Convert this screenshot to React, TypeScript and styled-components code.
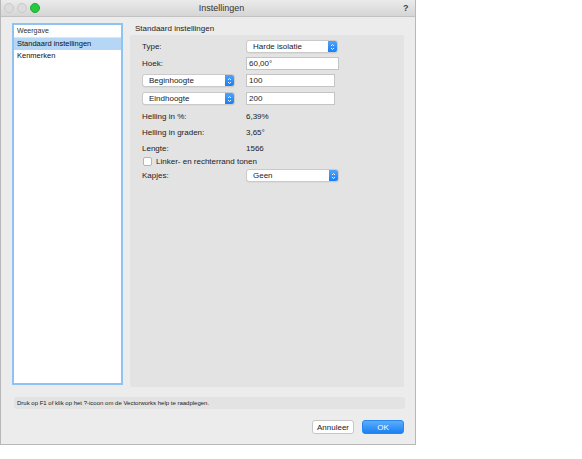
import React from "react";
import styled, { createGlobalStyle } from "styled-components";

const Global = createGlobalStyle`
  html, body { margin: 0; padding: 0; background: #ffffff; }
  body { font-family: "Liberation Sans", Arial, sans-serif; color: #222; }
  * { box-sizing: border-box; }
`;

const Window = styled.div`
  width: 416px;
  height: 445px;
  background: #ececec;
  border: 1px solid #b8b8b8;
  border-top: none;
  display: flex;
  flex-direction: column;
`;

const TitleBar = styled.div`
  height: 17px;
  background: linear-gradient(#ebebeb, #d5d5d5);
  border-bottom: 1px solid #c2c2c2;
  display: flex;
  align-items: center;
  padding: 0 4px 0 3px;
`;

const Lights = styled.div`
  display: flex;
  gap: 3px;
`;

const Light = styled.span<{ $c: string; $b: string }>`
  width: 10px;
  height: 10px;
  border-radius: 50%;
  background: ${(p) => p.$c};
  border: 1px solid ${(p) => p.$b};
`;

const Title = styled.div`
  flex: 1;
  text-align: center;
  font-size: 9px;
  color: #333;
`;

const Help = styled.div`
  font-size: 9px;
  font-weight: bold;
  color: #444;
  width: 8px;
`;

const Body = styled.div`
  flex: 1;
  display: flex;
  flex-direction: column;
  padding: 6px 11px 10px 11px;
`;

const Main = styled.div`
  display: flex;
  gap: 7px;
  height: 366px;
`;

const List = styled.div`
  width: 111px;
  height: 362px;
  background: #fff;
  border: 2px solid #8fc3f3;
  display: flex;
  flex-direction: column;
`;

const ListHeader = styled.div`
  font-size: 7px;
  height: 13px;
  line-height: 12px;
  padding-left: 3px;
  color: #333;
  border-bottom: 1px solid #e4e4e4;
`;

const ListItem = styled.div<{ $sel?: boolean }>`
  font-size: 7.5px;
  height: 12px;
  line-height: 12px;
  padding-left: 3px;
  background: ${(p) => (p.$sel ? "#b5d6f5" : "transparent")};
  color: #111;
`;

const Right = styled.div`
  flex: 1;
  display: flex;
  flex-direction: column;
`;

const PanelTitle = styled.div`
  font-size: 8px;
  height: 12px;
  line-height: 12px;
  padding-left: 5px;
  color: #222;
`;

const Panel = styled.div`
  width: 274px;
  height: 352px;
  background: #e3e3e3;
  border-radius: 2px;
  padding: 5px 0 0 12px;
  display: flex;
  flex-direction: column;
`;

const Row = styled.div<{ $h?: number; $mt?: number }>`
  display: flex;
  align-items: center;
  height: ${(p) => p.$h ?? 13}px;
  margin-top: ${(p) => p.$mt ?? 0}px;
`;

const Label = styled.div`
  width: 104px;
  font-size: 8px;
  color: #222;
`;

const Value = styled.div`
  font-size: 8px;
  color: #222;
`;

const Popup = styled.div<{ $w: number }>`
  width: ${(p) => p.$w}px;
  height: 13px;
  background: #fff;
  border: 1px solid #cacaca;
  border-radius: 3px;
  display: flex;
  align-items: stretch;
  overflow: hidden;
  box-shadow: 0 0.5px 0.5px rgba(0,0,0,0.08);
`;

const PopupText = styled.div`
  flex: 1;
  font-size: 8px;
  line-height: 11px;
  padding-left: 6px;
  color: #222;
`;

const Cap = styled.div`
  width: 9px;
  background: linear-gradient(#4ea4fb, #1a7ff3);
  display: flex;
  align-items: center;
  justify-content: center;
`;

const Field = styled.div<{ $w: number }>`
  width: ${(p) => p.$w}px;
  height: 13px;
  background: #fff;
  border: 1px solid #c4c4c4;
  font-size: 8px;
  line-height: 11px;
  padding-left: 2px;
  color: #222;
`;

const Check = styled.div`
  width: 9px;
  height: 9px;
  background: #fff;
  border: 1px solid #b4b4b4;
  border-radius: 2px;
  margin-right: 4px;
  margin-left: 1px;
`;

const HelpBar = styled.div`
  margin-top: 8px;
  margin-left: 2px;
  width: 391px;
  height: 12px;
  background: #e3e3e3;
  border-radius: 3px;
  font-size: 6px;
  line-height: 12px;
  padding-left: 3px;
  color: #222;
`;

const Buttons = styled.div`
  margin-top: 11px;
  display: flex;
  justify-content: flex-end;
  gap: 8px;
`;

const Button = styled.div<{ $primary?: boolean }>`
  width: 42px;
  height: 14px;
  border-radius: 3px;
  font-size: 8px;
  line-height: 13px;
  text-align: center;
  background: ${(p) => (p.$primary ? "linear-gradient(#5aaefc, #1b80f4)" : "#fff")};
  color: ${(p) => (p.$primary ? "#fff" : "#222")};
  border: 1px solid ${(p) => (p.$primary ? "#2a86ef" : "#c6c6c6")};
`;

const Gap = styled.div<{ $w: number }>`
  width: ${(p) => p.$w}px;
`;

const Chev = () => (
  <svg width="5" height="8" viewBox="0 0 5 8">
    <path d="M1 3 L2.5 1.5 L4 3 M1 5 L2.5 6.5 L4 5" fill="none" stroke="#fff" strokeWidth="0.9" />
  </svg>
);

const PopupBox = ({ w, text }: { w: number; text: string }) => (
  <Popup $w={w}>
    <PopupText>{text}</PopupText>
    <Cap>
      <Chev />
    </Cap>
  </Popup>
);

export default function App() {
  return (
    <>
      <Global />
      <Window>
        <TitleBar>
          <Lights>
            <Light $c="#dcdcdc" $b="#c9c9c9" />
            <Light $c="#dcdcdc" $b="#c9c9c9" />
            <Light $c="#27c93f" $b="#1faa34" />
          </Lights>
          <Title>Instellingen</Title>
          <Help>?</Help>
        </TitleBar>
        <Body>
          <Main>
            <List>
              <ListHeader>Weergave</ListHeader>
              <ListItem $sel>Standaard instellingen</ListItem>
              <ListItem>Kenmerken</ListItem>
            </List>
            <Right>
              <PanelTitle>Standaard instellingen</PanelTitle>
              <Panel>
                <Row>
                  <Label>Type:</Label>
                  <PopupBox w={92} text="Harde isolatie" />
                </Row>
                <Row $mt={4}>
                  <Label>Hoek:</Label>
                  <Field $w={93}>60,00°</Field>
                </Row>
                <Row $mt={4}>
                  <PopupBox w={93} text="Beginhoogte" />
                  <Gap $w={11} />
                  <Field $w={89}>100</Field>
                </Row>
                <Row $mt={5}>
                  <PopupBox w={93} text="Eindhoogte" />
                  <Gap $w={11} />
                  <Field $w={89}>200</Field>
                </Row>
                <Row $mt={5}>
                  <Label>Helling in %:</Label>
                  <Value>6,39%</Value>
                </Row>
                <Row $mt={3}>
                  <Label>Helling in graden:</Label>
                  <Value>3,65°</Value>
                </Row>
                <Row $mt={3}>
                  <Label>Lengte:</Label>
                  <Value>1566</Value>
                </Row>
                <Row $mt={0}>
                  <Check />
                  <Value>Linker- en rechterrand tonen</Value>
                </Row>
                <Row $mt={1}>
                  <Label>Kapjes:</Label>
                  <PopupBox w={93} text="Geen" />
                </Row>
              </Panel>
            </Right>
          </Main>
          <HelpBar>Druk op F1 of klik op het ?-icoon om de Vectorworks help te raadplegen.</HelpBar>
          <Buttons>
            <Button>Annuleer</Button>
            <Button $primary>OK</Button>
          </Buttons>
        </Body>
      </Window>
    </>
  );
}
